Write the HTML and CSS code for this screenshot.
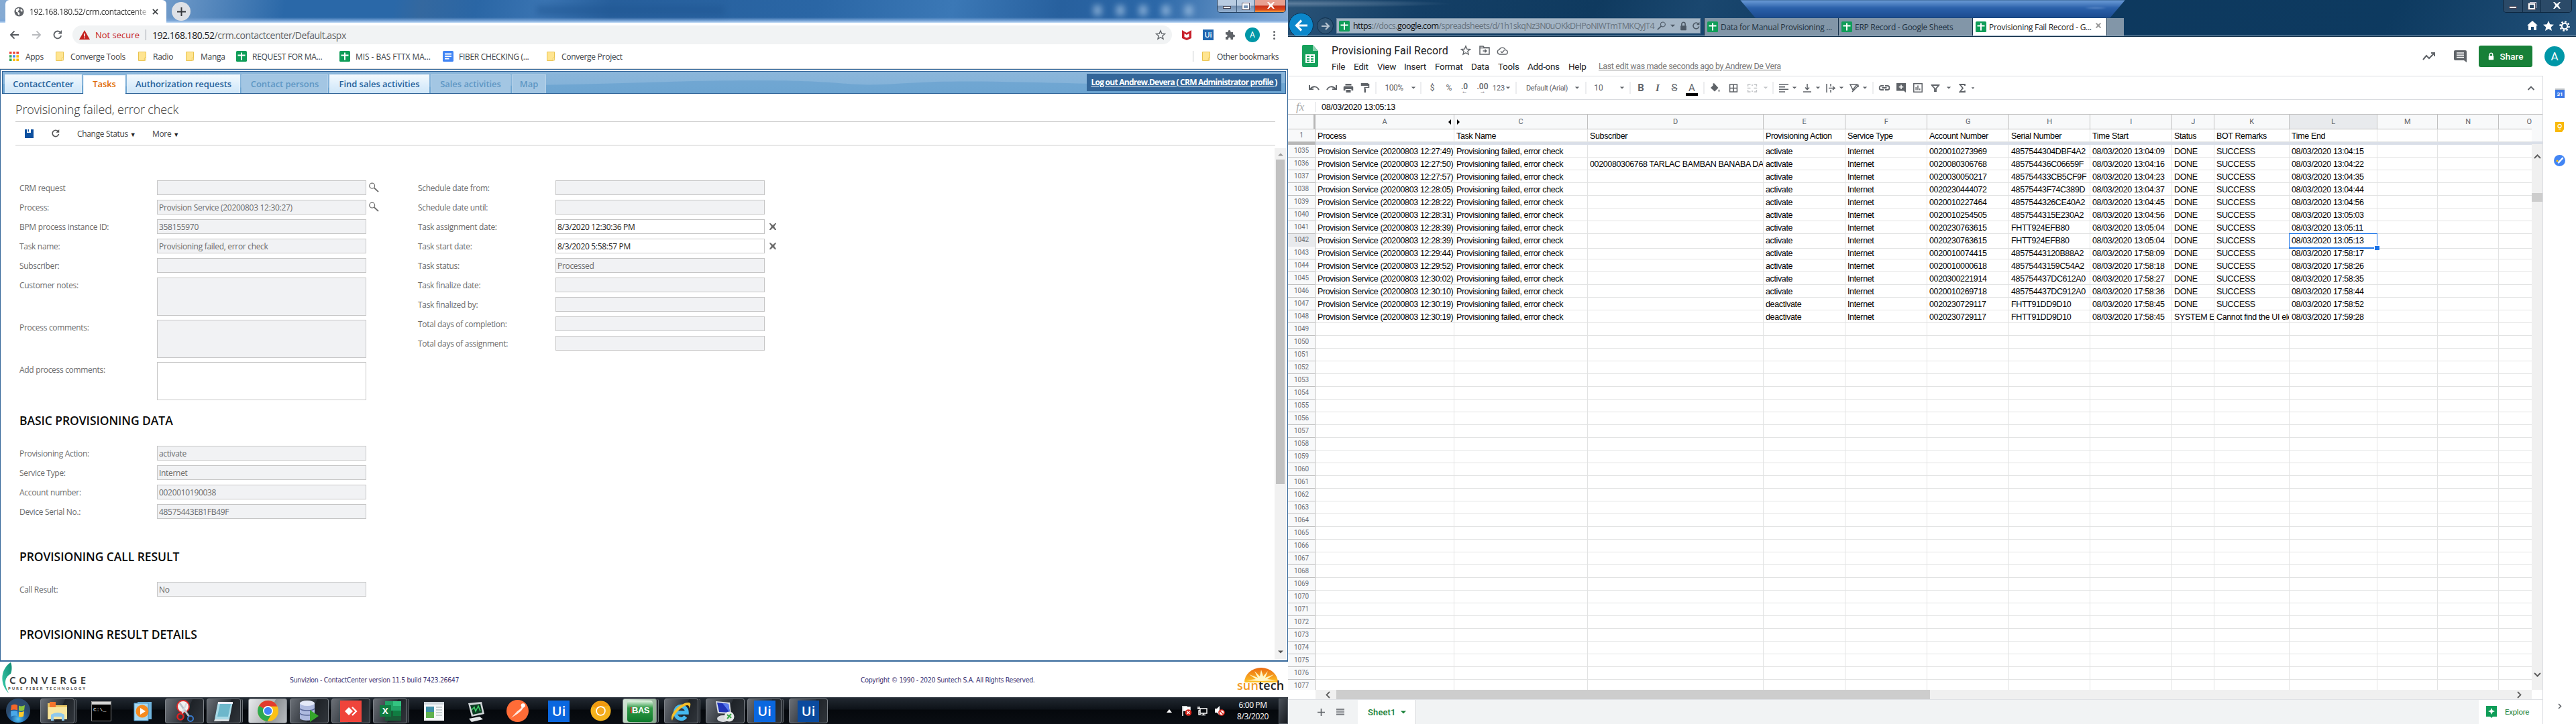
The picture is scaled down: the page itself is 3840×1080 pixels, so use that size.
FILE: index.html
```html
<!DOCTYPE html>
<html lang="en">
<head>
<meta charset="utf-8">
<title>Desktop</title>
<link rel="stylesheet" href="styles.css">
</head>
<body>
<svg class="sprite" aria-hidden="true">
  <symbol id="i-folder" viewBox="0 0 12 14"><path d="M.5.5h11v9l-2 3.9H.5z" fill="#ffe591" stroke="#e8c14b"/><path d="M9.3 13V9.5l2.2-1V13z" fill="#fff0b8" stroke="#e8c14b" stroke-width=".8"/></symbol>
  <symbol id="i-sheet" viewBox="0 0 16 16"><rect width="16" height="16" rx="1.6" fill="#0f9d58"/><path d="M7 2.5h2v3h4.500v2H9v6H7v-6H2.500v-2H7z" fill="#fff"/></symbol>
  <symbol id="i-doc" viewBox="0 0 16 16"><rect width="16" height="16" rx="1.600" fill="#4285f4"/><path d="M3 3.500h10v2H3zM3 7h10v2H3zM3 10.500h6.500v2H3z" fill="#fff"/></symbol>
  <symbol id="i-caret" viewBox="0 0 8 5"><path d="M0 .5h8L4 4.500z" fill="currentColor"/></symbol>
  <symbol id="i-star" viewBox="0 0 16 16"><path d="M8 1.800l1.800 4.300 4.700.4-3.600 3 1.100 4.600L8 11.700l-4 2.400 1.100-4.600-3.600-3 4.700-.4z" fill="none" stroke="currentColor" stroke-width="1.400"/></symbol>
  <symbol id="i-reload" viewBox="0 0 16 16"><path d="M13.200 9A5.400 5.400 0 1 1 11.800 4.200" fill="none" stroke="currentColor" stroke-width="1.900"/><path d="M14 1v5.500H8.500z" fill="currentColor"/></symbol>
  <symbol id="i-search" viewBox="0 0 16 16"><circle cx="5" cy="5.500" r="4.200" fill="none" stroke="currentColor" stroke-width="1.300"/><path d="M8 8.500l7 6.500" stroke="currentColor" stroke-width="2"/></symbol>
  <symbol id="i-lock" viewBox="0 0 12 16"><path d="M3 8V4.500a3 3 0 0 1 6 0V8" fill="none" stroke="currentColor" stroke-width="1.800"/><rect x="1" y="7" width="10" height="8" rx="1" fill="currentColor"/></symbol>
  <symbol id="i-chrome" viewBox="0 0 32 32"><circle cx="16" cy="16" r="15" fill="#fbc116"/><path d="M16 16L3 8.500A15 15 0 0 1 29.500 9.500H16z" fill="#e33b2e"/><path d="M16 16L3 8.500A15 15 0 0 0 15 31l7-12z" fill="#2da94f"/><circle cx="16" cy="16" r="7.200" fill="#fff"/><circle cx="16" cy="16" r="5.600" fill="#4285f4"/></symbol>
  <symbol id="i-x" viewBox="0 0 10 10"><path d="M1 0l4 3.400L9 0h1L6.700 5 10 10H8.500L5 6.600 1.500 10H0l3.300-5L0 0z" fill="currentColor" stroke="currentColor" stroke-width=".7"/></symbol>
</svg>

<div class="desktop">
<section class="monitor">
  <header class="chrome-tabs">
    <div class="chrome-tab">
      <svg width="15" height="15" viewBox="0 0 16 16"><circle cx="8" cy="8" r="7.500" fill="#5f6368"/><path d="M3 4l4-2 2 2-2 2-1 2 3 2-1 4-2-2-.5-3L3 8zM11 3l3 4-3 1-1-3z" fill="#fff"/></svg>
      <span class="chrome-tab-title">192.168.180.52/crm.contactcente</span>
      <svg class="tab-close" width="9" height="9" viewBox="0 0 10 10"><path d="M1 1l8 8M9 1L1 9" stroke="#3c4043" stroke-width="1.900"/></svg>
    </div>
    <span class="new-tab"><svg width="13" height="13" viewBox="0 0 12 12"><path d="M6 0v12M0 6h12" stroke="#35383c" stroke-width="1.800"/></svg></span>
    <div class="ghost ghost-a"></div><div class="ghost ghost-b"></div>
    <div class="win-buttons">
      <span><i class="w-min"></i></span><span><i class="w-max"></i></span><span class="w-close"><svg width="11" height="10"><use href="#i-x"/></svg></span>
    </div>
  </header>

  <div class="address-row">
    <svg width="15" height="14" viewBox="0 0 16 14"><path d="M15 7H2M8 1L2 7l6 6" fill="none" stroke="#55595e" stroke-width="1.900"/></svg>
    <svg width="15" height="14" viewBox="0 0 16 14"><path d="M1 7h13M8 1l6 6-6 6" fill="none" stroke="#b9bbbe" stroke-width="1.900"/></svg>
    <svg class="c-grey" width="16" height="16"><use href="#i-reload"/></svg>
    <div class="omnibox">
      <svg width="16" height="14" viewBox="0 0 16 14"><path d="M8 0l8 14H0z" fill="#c5221f"/><path d="M7.200 5h1.600v4.500H7.200zM7.200 10.800h1.600v1.500H7.200z" fill="#fff"/></svg>
      <span class="not-secure">Not secure</span>
      <span class="omni-url"><b>192.168.180.52</b>/crm.contactcenter/Default.aspx</span>
      <svg class="c-grey omni-star" width="16" height="16"><use href="#i-star"/></svg>
    </div>
    <svg width="14" height="15" viewBox="0 0 14 15"><path d="M0 0l7 4 7-4v12l-7 3-7-3z" fill="#c8202b"/><path d="M3.500 5L7 7l3.500-2v5L7 11.500 3.500 10z" fill="#fff"/></svg>
    <span class="ui-ext">Ui</span>
    <svg width="16" height="16" viewBox="0 0 16 16"><path d="M2 4h3.500V3a2 2 0 0 1 4 0v1H13v3.500h1a2 2 0 0 1 0 4h-1V15H9.500v-1.500a1.700 1.700 0 0 0-3.400 0V15H2v-4h1a1.700 1.700 0 0 0 0-3.400H2z" fill="#5f6368"/></svg>
    <span class="avatar avatar-sm">A</span>
    <span class="dots"><i></i><i></i><i></i></span>
  </div>

  <nav class="bookmarks">
    <span class="bm"><svg width="14" height="14" viewBox="0 0 14 14"><path d="M0 0h3.500v3.500H0zM5.200 0h3.500v3.500H5.200zM10.400 0H14v3.500h-3.600z" fill="#ea4335"/><path d="M0 5.200h3.500v3.500H0z" fill="#34a853"/><path d="M5.200 5.200h3.500v3.500H5.200z" fill="#4285f4"/><path d="M10.400 5.200H14v3.500h-3.600z" fill="#fbbc05"/><path d="M0 10.400h3.500V14H0z" fill="#34a853"/><path d="M5.200 10.400h3.500V14H5.200zM10.400 10.400H14V14h-3.600z" fill="#fbbc05"/></svg>Apps</span>
    <span class="bm"><svg width="12" height="14"><use href="#i-folder"/></svg>Converge Tools</span>
    <span class="bm"><svg width="12" height="14"><use href="#i-folder"/></svg>Radio</span>
    <span class="bm"><svg width="12" height="14"><use href="#i-folder"/></svg>Manga</span>
    <span class="bm bm-file"><svg width="16" height="16"><use href="#i-sheet"/></svg>REQUEST FOR MA...</span>
    <span class="bm bm-file wide"><svg width="16" height="16"><use href="#i-sheet"/></svg>MIS - BAS FTTX MA...</span>
    <span class="bm bm-file"><svg width="16" height="16"><use href="#i-doc"/></svg>FIBER CHECKING (...</span>
    <span class="bm"><svg width="12" height="14"><use href="#i-folder"/></svg>Converge Project</span>
    <span class="bm bm-other"><svg width="12" height="14"><use href="#i-folder"/></svg>Other bookmarks</span>
  </nav>

  <main class="crm">
    <div class="crm-head">
      <svg class="crm-wave" viewBox="0 0 1914 32" preserveAspectRatio="none"><path d="M0 18C320 26 620 26 960 16S1220 26 1350 17 1650 26 1914 17V32H0z" fill="#4a8fc6" opacity=".35"/></svg>
      <div class="crm-tabs">
        <span>ContactCenter</span><span class="on">Tasks</span><span>Authorization requests</span><span class="off">Contact persons</span><span>Find sales activities</span><span class="off">Sales activities</span><span class="off">Map</span>
      </div>
      <a class="logout">Log out Andrew.Devera ( CRM Administrator profile )</a>
    </div>
    <h1 class="crm-title">Provisioning failed, error check</h1>
    <div class="crm-tools">
      <svg width="13" height="13" viewBox="0 0 13 13"><path d="M0 0h3v5h6V0h4v13H0z" fill="#0d509f"/><path d="M4.500 0H6v3.500H4.500z" fill="#0d509f"/></svg>
      <svg class="refresh" width="14" height="14"><use href="#i-reload"/></svg>
      <span>Change Status <small>▼</small></span>
      <span>More <small>▼</small></span>
    </div>
    <div class="crm-body">
      <div class="crm-form">
        <div class="form-cols">
          <div>
            <div class="row"><label>CRM request</label><div class="field"></div><svg class="lens" width="15" height="15"><use href="#i-search"/></svg></div>
            <div class="row"><label>Process:</label><div class="field">Provision Service (20200803 12:30:27)</div><svg class="lens" width="15" height="15"><use href="#i-search"/></svg></div>
            <div class="row"><label>BPM process instance ID:</label><div class="field">358155970</div></div>
            <div class="row"><label>Task name:</label><div class="field">Provisioning failed, error check</div></div>
            <div class="row"><label>Subscriber:</label><div class="field"></div></div>
            <div class="row tall"><label>Customer notes:</label><div class="field"></div></div>
            <div class="row tall"><label>Process comments:</label><div class="field"></div></div>
            <div class="row tall"><label>Add process comments:</label><div class="field edit"></div></div>
          </div>
          <div>
            <div class="row"><label>Schedule date from:</label><div class="field"></div></div>
            <div class="row"><label>Schedule date until:</label><div class="field"></div></div>
            <div class="row"><label>Task assignment date:</label><div class="field edit">8/3/2020 12:30:36 PM</div><svg class="clear" width="10" height="10"><use href="#i-x"/></svg></div>
            <div class="row"><label>Task start date:</label><div class="field edit">8/3/2020 5:58:57 PM</div><svg class="clear" width="10" height="10"><use href="#i-x"/></svg></div>
            <div class="row"><label>Task status:</label><div class="field">Processed</div></div>
            <div class="row"><label>Task finalize date:</label><div class="field"></div></div>
            <div class="row"><label>Task finalized by:</label><div class="field"></div></div>
            <div class="row"><label>Total days of completion:</label><div class="field"></div></div>
            <div class="row"><label>Total days of assignment:</label><div class="field"></div></div>
          </div>
        </div>
        <h2 class="first">BASIC PROVISIONING DATA</h2>
        <div class="row"><label>Provisioning Action:</label><div class="field">activate</div></div>
        <div class="row"><label>Service Type:</label><div class="field">Internet</div></div>
        <div class="row"><label>Account number:</label><div class="field">0020010190038</div></div>
        <div class="row"><label>Device Serial No.:</label><div class="field">48575443E81FB49F</div></div>
        <h2>PROVISIONING CALL RESULT</h2>
        <div class="row"><label>Call Result:</label><div class="field">No</div></div>
        <h2>PROVISIONING RESULT DETAILS</h2>
      </div>
      <div class="crm-scroll"><svg width="8" height="5" viewBox="0 0 8 5"><path d="M0 4.500h8L4 .5z" fill="#9a9a9a"/></svg><i></i><svg width="8" height="5"><use href="#i-caret"/></svg></div>
    </div>
  </main>

  <footer class="crm-foot">
    <svg class="converge" width="129" height="48" viewBox="0 0 129 48"><defs><linearGradient id="cv" x1="1" y1="0" x2="0" y2="1"><stop offset="0" stop-color="#0c8a72"/><stop offset="1" stop-color="#3ed0ae"/></linearGradient></defs><path d="M16 0C3 8-3 30 13 46 5 32 7 22 16 17c2-5 2-12 0-17z" fill="url(#cv)"/><text x="14" y="32" textLength="114" class="cv-name">CONVERGE</text><text x="12" y="41" textLength="115" class="cv-sub">PURE FIBER TECHNOLOGY</text></svg>
    <span class="version">Sunvizion - ContactCenter version 11.5 build 7423.26647</span>
    <span class="copyright">Copyright © 1990 - 2020 Suntech S.A. All Rights Reserved.</span>
    <div class="suntech"><svg width="50" height="22" viewBox="0 0 50 22"><defs><linearGradient id="sg" x1="0" y1="0" x2="0" y2="1"><stop offset="0" stop-color="#ea6a12"/><stop offset="1" stop-color="#ffc425"/></linearGradient></defs><path d="M0 22a25 22 0 0 1 50 0z" fill="url(#sg)"/><path d="M25 20L3 19l14-2-10-7 13 5-5-10 8 8 2-10 3 10 7-8-4 10 13-5-10 7 14 2z" fill="#fff6c8"/></svg><b><em>sun</em>tech</b></div>
  </footer>

  <div class="taskbar">
    <svg class="start" width="38" height="38" viewBox="0 0 38 38"><defs><radialGradient id="orb" cx=".5" cy=".85"><stop offset="0" stop-color="#53c3f2"/><stop offset=".6" stop-color="#1f63a8"/><stop offset="1" stop-color="#2c4a6b"/></radialGradient></defs><circle cx="19" cy="19" r="18" fill="url(#orb)"/><path d="M9 11q5-2.500 9 0v7.500q-5-2-10 0z" fill="#f2672a"/><path d="M20 11.500q4 2 9-.5l-1 7.500q-4 2-8 .5z" fill="#8cc63e"/><path d="M8 20q5-2 10 0v7.500q-4-2-9.500.500z" fill="#4aa8e8"/><path d="M20 20.500q4 1.500 8-.5l-1 7.500q-3 2-7 .5z" fill="#fcc92c"/></svg>
    <div class="slots">
      <span class="slot box stack"><svg width="34" height="30" viewBox="0 0 34 30"><path d="M2 3h10l2 3h17v21H2z" fill="#e9c766"/><path d="M5 1h9v8H5z" fill="#f4742c"/><path d="M3 9h28v18H3z" fill="#f8e6a0"/><path d="M7 29v-9q10-6 20 0v9h-4v-6H11v6z" fill="#8fc9ee"/></svg></span>
      <span class="slot"><svg width="30" height="30" viewBox="0 0 30 30"><path d="M0 0h30v30H0z" fill="#000"/><path d="M0 0h30v5H0z" fill="#d6d6d6"/><path d="M.5.500h29v29H.5z" fill="none" stroke="#888"/><text x="3" y="15" class="cmd">C:\_</text></svg></span>
      <span class="slot"><svg width="28" height="30" viewBox="0 0 28 30"><path d="M6 1h21v26H6z" fill="#6fb3dc"/><path d="M1 3h21v26H1z" fill="#a7d8f0" stroke="#4a94c4"/><circle cx="13" cy="15" r="9.500" fill="#f68b1f"/><path d="M10 10l8 5-8 5z" fill="#fff"/></svg></span>
      <span class="slot box"><svg width="30" height="34" viewBox="0 0 30 34"><circle cx="13" cy="10" r="9" fill="#f1f1f1" stroke="#dd2a2a" stroke-width="2"/><path d="M8 5l14 20" stroke="#b9c0c8" stroke-width="3"/><path d="M18 5L11 22" stroke="#d5d9de" stroke-width="2.500"/><circle cx="24" cy="28" r="4" fill="none" stroke="#3a7cd0" stroke-width="2"/><circle cx="9" cy="25" r="4.500" fill="none" stroke="#e02020" stroke-width="2.500"/></svg></span>
      <span class="slot box stack"><svg width="32" height="32" viewBox="0 0 32 32"><path d="M7 2h22l-5 26H2z" fill="#a9d9e6"/><path d="M10 5h16l-4 19H6z" fill="#6db7cb"/><path d="M2 28h22l-1 3H1z" fill="#d8dfe2"/><path d="M7 2h22v3H7z" fill="#eef"/></svg></span>
      <span class="slot box lit"><svg width="33" height="33"><use href="#i-chrome"/></svg></span>
      <span class="slot box"><svg width="32" height="34" viewBox="0 0 32 34"><path d="M2 5v22c0 5 22 5 22 0V5z" fill="#aebadf"/><ellipse cx="13" cy="5" rx="11" ry="4" fill="#e4e9f8"/><path d="M2 13c3 4 19 4 22 0M2 20c3 4 19 4 22 0" fill="none" stroke="#5a6898" stroke-width="1.500"/><path d="M17 15l13 9-13 9z" fill="#36a52c"/></svg></span>
      <span class="slot box"><svg width="32" height="32" viewBox="0 0 32 32"><path d="M0 0h32v32H0z" fill="#ef443b"/><path d="M13 10l6 6-6 6-6-6z" fill="#fff"/><path d="M18 10l6 6-6 6" fill="none" stroke="#fff" stroke-width="2.300"/></svg></span>
      <span class="slot box stack"><svg width="32" height="29" viewBox="0 0 32 29"><path d="M8 0h24v29H8z" fill="#21a366"/><path d="M20 0h12v7H20z" fill="#33c481"/><path d="M8 14h24v15H8z" fill="#185c37"/><path d="M20 14h12v8H20z" fill="#107c41"/><path d="M0 6h17v17H0z" fill="#107c41"/><text x="4" y="19" class="xl">X</text></svg></span>
      <span class="slot"><svg width="30" height="28" viewBox="0 0 30 28"><path d="M0 0h30v28H0z" fill="#f4f6f8"/><path d="M0 0h30v4H0z" fill="#cfd6dc"/><path d="M3 7h12v17H3z" fill="#3f8fa8"/><path d="M3 15h12v9H3z" fill="#5fb04e"/><path d="M18 8h9M18 12h9M18 16h9M18 20h9" stroke="#9aa" /></svg></span>
      <span class="slot"><svg width="32" height="32" viewBox="0 0 32 32"><path d="M5 4l20-2 4 18-19 4z" fill="#cfd3d6"/><path d="M8 7l15-2 3 13-14 3z" fill="#0d3b22"/><path d="M10 14l4-4 2 6 4-8 3 8" fill="none" stroke="#41d36a" stroke-width="1.500"/><path d="M6 27l16-3 5 4-17 4z" fill="#e3e6e8"/></svg></span>
      <span class="slot"><svg width="33" height="33" viewBox="0 0 32 32"><circle cx="16" cy="16" r="16" fill="#ff6c37"/><path d="M7 26l8-9 5-4 3-4 2 2-4 5-5 4z" fill="#fff" opacity=".85"/><circle cx="24" cy="8" r="3" fill="#fff"/></svg></span>
      <span class="slot"><i class="uipath">Ui</i></span>
      <span class="slot"><svg width="31" height="31" viewBox="0 0 32 32"><circle cx="16" cy="16" r="15.500" fill="#f5b21b"/><path d="M16 16L3 8.500A15.500 15.500 0 0 1 29.500 8.500H16z" fill="#f09a10"/><circle cx="16" cy="16" r="7.500" fill="#fff"/><circle cx="16" cy="16" r="5.700" fill="#f4a71c"/></svg></span>
      <span class="slot box stack bright"><i class="ibas"><b>i</b>BAS</i></span>
      <span class="slot box stack"><svg width="34" height="34" viewBox="0 0 34 34"><path d="M8 19h17a8.700 9.500 0 1 0-2 6" fill="none" stroke="#45b9ef" stroke-width="5.500"/><path d="M3 31C-3 22 16 3 28 4c4 1 2 5 0 9 1-5-2-6-6-4C13 13 5 23 3 31z" fill="#f5bf2a"/></svg></span>
      <span class="slot box"><svg width="34" height="34" viewBox="0 0 34 34"><path d="M3 2l21 2 2 17L6 20z" fill="#d7dce4"/><path d="M5 4l17 2 2 13L8 18z" fill="#2034b8"/><path d="M13 5l9 1 2 13z" fill="#5b7cf0"/><ellipse cx="14" cy="28" rx="9" ry="5" fill="#d9dcdf"/><circle cx="23" cy="25" r="7.500" fill="#e7eae8"/><path d="M20 22l3 3-3 3M26 21l-3 3 3 3" fill="none" stroke="#35a646" stroke-width="2"/></svg></span>
      <span class="slot box stack"><i class="uipath">Ui</i></span>
      <span class="slot box"><i class="uipath navy">Ui</i></span>
    </div>
    <div class="tray">
      <svg width="8" height="5" viewBox="0 0 8 5"><path d="M0 5h8L4 0z" fill="#fff"/></svg>
      <svg width="16" height="16" viewBox="0 0 16 16"><path d="M2 1v15M3 2h5l1 1h4v6H8L7 8H3" fill="#fff" stroke="#fff" stroke-width="1.500"/><circle cx="10.500" cy="11" r="4.800" fill="#d9261c"/><path d="M8.500 9l4 4M12.500 9l-4 4" stroke="#fff" stroke-width="1.300"/></svg>
      <svg width="16" height="15" viewBox="0 0 16 15"><path d="M5 4h10v7H5zM7 13.500h6M10 11v3M2 1v3M4 1v3M1 4h4v3H3v6h3" fill="none" stroke="#fff" stroke-width="1.400"/></svg>
      <svg width="16" height="16" viewBox="0 0 16 16"><path d="M1 5h3l4-4v14l-4-4H1z" fill="#fff"/><circle cx="11" cy="11" r="4" fill="#fff" stroke="#d9261c" stroke-width="1.700"/><path d="M8.300 8.300l5.500 5.500" stroke="#d9261c" stroke-width="1.500"/></svg>
      <div class="clock">6:00 PM<br>8/3/2020</div>
      <i class="show-desktop"></i>
    </div>
  </div>
</section>

<section class="monitor">
  <header class="ie-head">
    <div class="ie-glow"></div>
    <div class="win-buttons ie-win">
      <span><i class="w-min"></i></span><span><i class="w-max"></i></span><span class="ie-close"><svg width="11" height="10"><use href="#i-x"/></svg></span>
    </div>
    <div class="ie-row">
      <span class="ie-back"><svg width="20" height="18" viewBox="0 0 20 18"><path d="M19 9H3M10 1.500L2.500 9l7.500 7.500" fill="none" stroke="#fff" stroke-width="3.200"/></svg></span>
      <span class="ie-fwd"><svg width="14" height="12" viewBox="0 0 14 12"><path d="M1 6h11M7 1l5 5-5 5" fill="none" stroke="#b4c2cf" stroke-width="2.200"/></svg></span>
      <div class="ie-addr">
        <svg width="16" height="16"><use href="#i-sheet"/></svg>
        <span class="ie-url"><b>https</b>://docs.<b>google.com</b>/spreadsheets/d/1h1skqNz3N0uOKkDHPoNIWTmTMKQyJT4</span>
        <svg class="flip" width="13" height="13"><use href="#i-search"/></svg>
        <svg width="7" height="5"><use href="#i-caret"/></svg>
        <svg width="11" height="14"><use href="#i-lock"/></svg>
        <svg width="13" height="13"><use href="#i-reload"/></svg>
      </div>
      <div class="ie-tabs">
        <span><svg width="16" height="16"><use href="#i-sheet"/></svg>Data for Manual Provisioning ...</span>
        <span><svg width="16" height="16"><use href="#i-sheet"/></svg>ERP Record - Google Sheets</span>
        <span class="on"><svg width="16" height="16"><use href="#i-sheet"/></svg>Provisioning Fail Record - G...<svg class="ie-x" width="8" height="8"><use href="#i-x"/></svg></span>
        <span class="blank"></span>
      </div>
      <div class="ie-icons">
        <svg width="16" height="14" viewBox="0 0 16 14"><path d="M8 0l8 7h-2v7h-4V9H6v5H2V7H0z" fill="#fff"/></svg>
        <svg width="16" height="15" viewBox="0 0 16 15"><path d="M8 0l2.300 5.200 5.700.6-4.300 3.800L13 15l-5-3-5 3 1.300-5.400L0 5.800l5.700-.6z" fill="#fff"/></svg>
        <svg width="16" height="16" viewBox="0 0 16 16"><circle cx="8" cy="8" r="4.300" fill="none" stroke="#fff" stroke-width="2.200"/><circle cx="8" cy="8" r="6.600" fill="none" stroke="#fff" stroke-width="2.400" stroke-dasharray="2.600 2.584"/></svg>
      </div>
    </div>
  </header>

  <div class="sheets">
    <header class="doc-head">
      <svg class="doc-logo" width="24" height="33" viewBox="0 0 24 33"><path d="M2 0h14l8 9v22a2 2 0 0 1-2 2H2a2 2 0 0 1-2-2V2a2 2 0 0 1 2-2z" fill="#16a15c"/><path d="M16 0l8 9h-8z" fill="#8ed1b1"/><path d="M5 14h14v13H5zM7 16v2h4v-2zm6 0v2h4v-2zm-6 4v2h4v-2zm6 0v2h4v-2zm-6 3.500v2h4v-2zm6 0v2h4v-2z" fill="#fff" fill-rule="evenodd"/></svg>
      <div class="doc-meta">
        <div class="doc-title"><span>Provisioning Fail Record</span>
          <svg width="16" height="16"><use href="#i-star"/></svg>
          <svg width="16" height="14" viewBox="0 0 16 14"><path d="M1 1h5l1.500 2H15v10H1zM1 3.500h14M5.500 8h5M8.500 5.800l2.300 2.200-2.300 2.200" fill="none" stroke="#5f6368" stroke-width="1.500"/></svg>
          <svg width="17" height="13" viewBox="0 0 17 13"><path d="M4.500 12a3.600 3.600 0 0 1-.3-7.100A4.700 4.700 0 0 1 13 5.600 3.200 3.200 0 0 1 13 12zM6 7.500l2 2 3.500-3.500" fill="none" stroke="#5f6368" stroke-width="1.400"/></svg>
        </div>
        <nav class="doc-menu"><span>File</span><span>Edit</span><span>View</span><span>Insert</span><span>Format</span><span>Data</span><span>Tools</span><span>Add-ons</span><span>Help</span><a>Last edit was made seconds ago by Andrew De Vera</a></nav>
      </div>
      <div class="doc-actions">
        <svg width="20" height="12" viewBox="0 0 20 12"><path d="M1 11l5-6 4 4 8-8M13 1h5v5" fill="none" stroke="#5f6368" stroke-width="2"/></svg>
        <svg width="19" height="18" viewBox="0 0 19 18"><path d="M2 0h15a2 2 0 0 1 2 2v16l-4-3H2a2 2 0 0 1-2-2V2a2 2 0 0 1 2-2z" fill="#5f6368"/><path d="M4 4h11M4 7.300h11M4 10.600h11" stroke="#fff" stroke-width="1.500"/></svg>
        <button class="share"><svg width="9" height="12"><use href="#i-lock"/></svg>Share</button>
        <span class="avatar avatar-lg">A</span>
      </div>
    </header>
    <div class="doc-body">
      <div class="doc-main">
        <div class="doc-tools">
          <svg width="16" height="8" viewBox="0 0 16 8"><path d="M1 0v6h6M2 6C6 1 12 1 15 7" fill="none" stroke="#5f6368" stroke-width="2"/></svg>
          <svg width="16" height="8" viewBox="0 0 16 8"><path d="M15 0v6H9M14 6C10 1 4 1 1 7" fill="none" stroke="#5f6368" stroke-width="2"/></svg>
          <svg width="15" height="13" viewBox="0 0 15 13"><path d="M3 0h9v2.500H3zM2 3.500h11a2 2 0 0 1 2 2V10h-3V8H3v2H0V5.500a2 2 0 0 1 2-2zM4 9h7v4H4z" fill="#5f6368"/></svg>
          <svg width="13" height="14" viewBox="0 0 13 14"><path d="M0 0h11v4H0zM11 1h2v6H7v2H5V6h6zM5 8.500h2.500V14H5z" fill="#5f6368"/></svg>
          <i class="sep"></i><span class="zoom">100%</span><svg width="7" height="4"><use href="#i-caret"/></svg><i class="sep"></i>
          <span>$</span><span>%</span><span class="dec">.0<u>←</u></span><span class="dec">.00<u>→</u></span><span class="n123">123</span><svg width="7" height="4"><use href="#i-caret"/></svg><i class="sep"></i>
          <span class="tiny">Default (Arial)</span><svg width="7" height="4"><use href="#i-caret"/></svg><i class="sep"></i>
          <span>10</span><svg width="7" height="4"><use href="#i-caret"/></svg><i class="sep"></i>
          <b class="lt">B</b><em class="lt ser">I</em><s class="lt">S</s><span class="lt fg">A</span><i class="sep"></i>
          <svg width="14" height="14" viewBox="0 0 14 14"><path d="M5 0l6.500 7L6 12.500 0 7l4-4-1-2zM12.500 9q2 3 0 4-2-1 0-4z" fill="#5f6368"/></svg>
          <svg width="13" height="13" viewBox="0 0 13 13"><path d="M1 1h11v11H1zM6.500 1v11M1 6.500h11" fill="none" stroke="#5f6368" stroke-width="1.700"/></svg>
          <svg width="15" height="13" viewBox="0 0 15 13"><path d="M1 4V1h4M10 1h4v3M14 9v3h-4M5 12H1V9M0 6.500h5M10 6.500h5M7.500 1v2M7.500 10v2" fill="none" stroke="#c3c5c8" stroke-width="1.700"/></svg>
          <svg class="dim" width="7" height="4"><use href="#i-caret"/></svg><i class="sep"></i>
          <svg width="14" height="13" viewBox="0 0 14 13"><path d="M0 1h14M0 4.600h9M0 8.300h14M0 12h9" stroke="#5f6368" stroke-width="1.600"/></svg><svg width="7" height="4"><use href="#i-caret"/></svg>
          <svg width="12" height="13" viewBox="0 0 12 13"><path d="M6 0v8M3 5.500L6 8.500l3-3M0 12h12" fill="none" stroke="#5f6368" stroke-width="1.600"/></svg><svg width="7" height="4"><use href="#i-caret"/></svg>
          <svg width="14" height="13" viewBox="0 0 14 13"><path d="M1 0v13M7 0v4M7 9v4M4 6.500h9M10 4l3 2.500L10 9" fill="none" stroke="#5f6368" stroke-width="1.500"/></svg><svg width="7" height="4"><use href="#i-caret"/></svg>
          <svg width="14" height="13" viewBox="0 0 14 13"><path d="M1 1l4 8 6-8zM4 12l9-9M10 2h3v3" fill="none" stroke="#5f6368" stroke-width="1.500"/></svg><svg width="7" height="4"><use href="#i-caret"/></svg><i class="sep"></i>
          <svg width="17" height="8" viewBox="0 0 17 8"><path d="M7.500 1H4a3 3 0 0 0 0 6h3.500M9.500 1H13a3 3 0 0 1 0 6H9.500M5 4h7" fill="none" stroke="#5f6368" stroke-width="1.800"/></svg>
          <svg width="14" height="14" viewBox="0 0 14 14"><path d="M0 0h14v14l-3-2.500H0z" fill="#5f6368"/><path d="M7 2.500v6.500M3.700 5.800h6.600" stroke="#fff" stroke-width="1.600"/></svg>
          <svg width="14" height="14" viewBox="0 0 14 14"><path d="M.8.8h12.400v12.400H.8zM4.200 10.500V6M7 10.500v-7M9.800 10.500V8" fill="none" stroke="#5f6368" stroke-width="1.500"/></svg>
          <svg width="13" height="11" viewBox="0 0 13 11"><path d="M1 1h11L7.500 6v4h-2V6z" fill="none" stroke="#5f6368" stroke-width="1.800"/></svg><svg width="7" height="4"><use href="#i-caret"/></svg>
          <svg width="10" height="13" viewBox="0 0 10 13"><path d="M9 3V1H1.500L6 6.500 1.500 12H9v-2" fill="none" stroke="#5f6368" stroke-width="1.800"/></svg><svg width="5" height="3"><use href="#i-caret"/></svg>
          <svg width="11" height="7" viewBox="0 0 11 7"><path d="M1 6l4.500-4.500L10 6" fill="none" stroke="#5f6368" stroke-width="1.900"/></svg>
        </div>
        <div class="fx-bar"><i>fx</i><span>08/03/2020 13:05:13</span></div>
        <div class="grid-wrap">
          <div class="grid" id="grid"></div>
          <div class="v-scroll"><svg width="11" height="7" viewBox="0 0 11 7"><path d="M1 6l4.500-4.500L10 6" fill="none" stroke="#606060" stroke-width="2"/></svg><i></i><svg width="11" height="7" viewBox="0 0 11 7"><path d="M1 1l4.500 4.500L10 1" fill="none" stroke="#606060" stroke-width="2"/></svg></div>
        </div>
        <div class="h-scroll"><svg width="7" height="11" viewBox="0 0 7 11"><path d="M6 1L1.500 5.500 6 10" fill="none" stroke="#606060" stroke-width="1.800"/></svg><i></i><svg width="7" height="11" viewBox="0 0 7 11"><path d="M1 1l4.500 4.500L1 10" fill="none" stroke="#606060" stroke-width="1.800"/></svg></div>
        <footer class="sheet-tabs">
          <svg width="11" height="11" viewBox="0 0 11 11"><path d="M5.500 0v11M0 5.500h11" stroke="#5f6368" stroke-width="1.600"/></svg>
          <svg width="12" height="10" viewBox="0 0 12 10"><path d="M0 1h12M0 3.700h12M0 6.400h12M0 9.100h12" stroke="#5f6368" stroke-width="1.500"/></svg>
          <span class="sheet-tab">Sheet1<svg width="8" height="5"><use href="#i-caret"/></svg></span>
          <span class="explore"><svg width="16" height="18" viewBox="0 0 16 18"><path d="M0 0h16v16h-6l-2 2-2-2H0z" fill="#0f9d58"/><path d="M8 3l1.500 3.500L13 8 9.500 9.500 8 13 6.500 9.500 3 8l3.500-1.500z" fill="#fff"/></svg>Explore</span>
        </footer>
      </div>
      <aside class="side">
        <svg width="14" height="15" viewBox="0 0 14 15"><path d="M0 1h14v3H0z" fill="#bfc3c8"/><path d="M0 3h14v12H0z" fill="#3b78e7"/><text x="2.500" y="12" class="cal">31</text></svg>
        <svg width="15" height="15" viewBox="0 0 15 15"><path d="M1 0h13v11l-3 4H1z" fill="#f9b908"/><circle cx="7.500" cy="6" r="2.600" fill="none" stroke="#fff" stroke-width="1.200"/><path d="M6 10.500h3" stroke="#fff" stroke-width="1.400"/></svg>
        <svg width="17" height="17" viewBox="0 0 17 17"><circle cx="8.500" cy="8.500" r="8.500" fill="#4285f4"/><path d="M7 11.500l6-6.500" stroke="#fff" stroke-width="2.500" stroke-linecap="round"/><circle cx="5" cy="9" r="1.600" fill="#fbbc05"/></svg>
        <svg class="side-more" width="6" height="9" viewBox="0 0 6 9"><path d="M1 1l3.500 3.500L1 8" fill="none" stroke="#5f6368" stroke-width="1.500"/></svg>
      </aside>
    </div>
  </div>
</section>
</div>
<script src="script.js"></script>
</body>
</html>
```
FILE: styles.css
```css
* { box-sizing: border-box; }
body { margin: 0; font-family: "Open Sans", "Noto Sans", sans-serif; font-size: 12px; color: #333; background: #fff; }
svg { display: block; flex: none; }
i, em { font-style: normal; }
.sprite { position: absolute; width: 0; height: 0; }
.desktop { display: flex; width: 3840px; height: 1080px; overflow: hidden; }
.monitor { width: 1920px; height: 1080px; display: flex; flex-direction: column; overflow: hidden; white-space: nowrap; }
.c-grey { color: #5f6368; }

/* browser title bar */
.chrome-tabs { position: relative; height: 34px; display: flex; padding-left: 8px; background: linear-gradient(180deg, transparent 26px, #7ba6d8 31px, #c3dcf6 34px), linear-gradient(100deg, #86abd3 0, #6e99c8 250px, #2a68a8 420px, #2a68a8 580px, #34689f 620px, #2a66a5 700px, #3a74b2 800px, #275f9c 900px, #2a66a5 1200px, #3b78b6 1400px, #27609e 1560px, #2c68a8 1700px, #6f9bcb 1850px, #8fb3dc 1920px); }
.chrome-tab { width: 240px; height: 34px; display: flex; align-items: center; padding: 0 11px 0 13px; background: #fff; border-radius: 6px 6px 0 0; }
.chrome-tab-title { margin-left: 8px; width: 176px; letter-spacing: -.4px; mask-image: linear-gradient(90deg, #000 155px, rgba(0, 0, 0, .25)); }
.tab-close { margin-left: 7px; }
.new-tab { width: 28px; height: 28px; margin: 3px 0 0 8px; border-radius: 50%; background: #dee1e6; display: flex; align-items: center; justify-content: center; }
.ghost { position: absolute; top: 8px; height: 15px; filter: blur(5px); background: #1f5692; opacity: .5; }
.ghost-a { left: 800px; width: 280px; }
.ghost-b { left: 1630px; width: 150px; background: repeating-linear-gradient(90deg, #bcd6f0 0 12px, transparent 12px 34px); opacity: .6; }
.win-buttons { margin: 0 3px 0 auto; width: 103px; height: 19px; display: grid; grid-template-columns: 29px 27px 47px; border: 1px solid #24405f; border-top: 0; border-radius: 0 0 5px 5px; overflow: hidden; position: relative; }
.win-buttons span { display: flex; align-items: center; justify-content: center; background: linear-gradient(#b9cce2 45%, #7691b1 50%, #93afcf); border-right: 1px solid #3c5879; }
.win-buttons .w-close { background: linear-gradient(#e8a090 42%, #c8321a 50%, #d9481c 80%, #f3a040); border: 0; color: #fff; padding-bottom: 2px; }
.w-min { width: 12px; height: 4px; background: #fff; border: 1px solid #445; margin-top: 4px; }
.w-max { width: 10px; height: 9px; border: 2px solid #fff; outline: 1px solid #556; box-shadow: 2px -2px 0 #dde; }

/* address bar */
.address-row { height: 36px; display: flex; align-items: center; padding-left: 14px; }
.address-row > svg:nth-child(2) { margin-left: 18px; }
.address-row > svg:nth-child(3) { margin-left: 16px; }
.omnibox { width: 1639px; height: 28px; margin: 0 15px 0 14px; padding: 0 9px 0 10px; border-radius: 14px; background: #f1f3f4; display: flex; align-items: center; font-size: 14px; color: #5f6368; }
.not-secure { margin-left: 8px; width: 76px; color: #c5221f; font-size: 13px; border-right: 1px solid #9aa0a6; line-height: 16px; }
.omni-url { margin-left: 9px; letter-spacing: -.47px; }
.omni-url b { color: #202124; font-weight: 400; }
.omni-star { margin-left: auto; }
.ui-ext { width: 16px; height: 16px; margin: 0 16px 0 17px; background: #1f66b0; color: #fff; font: 600 11px/15px "Open Sans", sans-serif; text-align: center; }
.avatar { border-radius: 50%; background: #0097a7; color: #fff; text-align: center; font-family: Roboto, sans-serif; }
.avatar-sm { width: 22px; height: 22px; margin: 0 20px 0 15px; font-size: 12px; line-height: 22px; }
.dots { display: grid; gap: 2px; }
.dots i { width: 3px; height: 3px; border-radius: 50%; background: #5f6368; }

/* bookmarks */
.bookmarks { height: 33px; padding-left: 14px; border-bottom: 1px solid #d4d6d9; display: grid; grid-template-columns: 69px 123px 71px 75px 154px 154px 155px 963px 1fr; align-items: center; padding-bottom: 4px; color: #3c4043; letter-spacing: -.28px; }
.bm { display: flex; align-items: center; gap: 10px; }
.bm-file { gap: 8px; }
.bm.wide { letter-spacing: -.06px; }
.bm-other { border-left: 1px solid #c4c7ca; padding-left: 13px; height: 16px; letter-spacing: -.44px; }

/* CRM page */
.crm { height: 884px; border: 1px solid #336699; border-bottom-width: 2px; padding: 2px; display: flex; flex-direction: column; }
.crm-head { position: relative; height: 34px; flex: none; border: 1px solid #336699; background: linear-gradient(#8bb6da, #7fb0d8); display: flex; justify-content: space-between; padding: 4px 6px 0 3px; }
.crm-wave { position: absolute; left: 0; top: 0; width: 100%; height: 100%; }
.crm-tabs { position: relative; display: grid; grid-template-columns: 117px 65px 171px 131px 151px 121px 53px; font: 600 13px/26px "Open Sans", sans-serif; letter-spacing: -.05px; color: #28639b; text-align: center; }
.crm-tabs span { margin-right: 2px; background: linear-gradient(#f3f9fd, #ddeefb 55%, #cfe6f8); border: 1px solid #e6f1fa; border-bottom: 0; }
.crm-tabs .on { background: #fff; color: #e06c05; margin: 1px 2px -1px 0; line-height: 25px; }
.crm-tabs .off { background: #a3c6e3; color: #5f97c4; border-color: #b7d2e9; }
.logout { position: relative; margin-top: -1px; height: 26px; width: 290px; background: #336699; color: #fff; font-weight: 700; font-size: 12px; line-height: 26px; text-align: center; text-decoration: underline; letter-spacing: -.75px; }
.crm-title { margin: 0 16px 0 20px; height: 42px; flex: none; border-bottom: 1px solid #ccc; font-weight: 300; font-size: 18px; line-height: 46px; letter-spacing: -.14px; color: #333; }
.crm-tools { height: 35px; flex: none; margin: 0 16px 0 20px; padding-left: 14px; border-bottom: 1px solid #ccc; display: grid; grid-template-columns: 39px 39px 112px 1fr; align-items: center; letter-spacing: -.33px; color: #444; }
.crm-tools small { font-size: 9px; color: #222; }
.refresh { color: #555; }
.crm-body { flex: 1; min-height: 0; display: flex; justify-content: space-between; padding-top: 4px; }
.crm-form { padding: 48px 0 0 26px; }
.form-cols { display: grid; grid-template-columns: 594px 560px; height: 334px; }
.row { display: flex; height: 29px; color: #6b6b6b; letter-spacing: -.31px; }
.row.tall { height: 63px; }
.row label { width: 205px; line-height: 24px; }
.field { width: 312px; height: 22px; border: 1px solid #c6c6c6; background: #f1f2f4; padding-left: 2px; line-height: 22px; }
.tall .field { height: 57px; }
.field.edit { background: #fff; color: #222; }
.lens { margin: 3px 0 0 4px; color: #6d6d6d; }
.clear { margin: 6px 0 0 7px; color: #666; }
h2 { margin: 37px 0 26px; font-size: 17.500px; font-weight: 600; line-height: 24px; color: #0a0a0a; letter-spacing: -.07px; }
h2.first { margin-top: 12px; }
.crm-scroll { width: 17px; height: 762px; background: #f1f1f1; display: flex; flex-direction: column; align-items: center; padding: 7px 0 8px; color: #555; }
.crm-scroll i { width: 13px; height: 484px; margin: 5px 0 auto; background: #c1c1c1; }

.crm-foot { height: 53px; display: grid; grid-template-columns: 432px 851px 561px 1fr; align-items: center; font: 10.500px "DejaVu Sans Condensed", "Noto Sans", sans-serif; color: #3b3170; background: #fff; letter-spacing: -.35px; }
.converge { align-self: start; margin-top: 1px; }
.cv-name { font: 600 15px "Noto Sans", sans-serif; fill: #33373a; letter-spacing: 0; }
.cv-sub { font: 700 6px "Noto Sans", sans-serif; fill: #555; letter-spacing: 0; }
.suntech { width: 72px; }
.suntech svg { margin: 0 auto; }
.suntech b { display: block; font: 600 18px/18px "Open Sans", sans-serif; margin-top: -5px; color: #1c1c1c; letter-spacing: .1px; }
.suntech em { color: #f29a1f; }

/* taskbar */
.taskbar { height: 40px; display: flex; background: linear-gradient(#3a424c 0, #20272f 2px, #0d1218 18px, #05080c 19px, #0a0e13); }
.start { margin: 1px 14px 0 8px; }
.slots { display: grid; grid-template-columns: repeat(19, 62px); }
.slot { height: 37px; margin: 2px 4px 0 0; display: flex; align-items: center; justify-content: center; }
.slot.box { border: 1px solid #7d8288; border-radius: 3px; background: linear-gradient(115deg, #6a6f76, #2c3138 55%, #1e2227 56%, #30353b); }
.slot.stack { margin-right: 11px; box-shadow: 3px 0 0 -1px #20252b, 4px 0 0 -1px #6c7177; }
.slot.lit { background: linear-gradient(115deg, #e8eaec, #b0b4b8 55%, #8a8e92 56%, #b8bcc0); }
.slot.bright { background: linear-gradient(115deg, #d5e8d8, #87a98c); }
.cmd { font: 8px "Liberation Mono", monospace; fill: #fff; }
.xl { font: 700 13px "Open Sans", sans-serif; fill: #fff; }
.uipath { width: 32px; height: 32px; background: #0a67df; color: #fff; font: 600 20px/31px "Open Sans", sans-serif; text-align: center; }
.uipath.navy { background: #0a4a9e; }
.ibas { width: 38px; height: 32px; background: linear-gradient(#e9f7e8, #2f9a46 35%, #0f7a2b); border-radius: 4px; color: #fff; font: 700 13px/30px "Liberation Sans", sans-serif; text-align: center; letter-spacing: -.5px; }
.ibas b { color: #e12b1f; }
.tray { margin-left: auto; display: flex; align-items: center; color: #fff; }
.tray svg:nth-child(1) { margin-right: 14px; }
.tray svg:nth-child(2) { margin-right: 7px; }
.tray svg:nth-child(3) { margin-right: 10px; }
.clock { width: 80px; padding-left: 3px; text-align: center; line-height: 17px; letter-spacing: -.4px; }
.show-desktop { width: 14px; height: 38px; margin-top: 1px; border: 1px solid #555c64; background: linear-gradient(115deg, #4a5058, #171b20); }

/* second browser */
.ie-head { position: relative; height: 55px; background: radial-gradient(ellipse at 0 10%, #5d7d9c 0, transparent 9%), linear-gradient(115deg, #2a5377 0, #143f66 180px, #0f3a5f 420px, #1a476f 560px, #0d385d 800px, #0d3a60 1500px, #1c4a72 1700px, #3b6488 1860px, #5f82a3 1920px); border-bottom: 1px solid #12304a; }
.ie-glow { position: absolute; left: 674px; top: 0; width: 574px; height: 27px; background: radial-gradient(ellipse at 45px 12px, #b8d4f4 0 4px, transparent 14px), radial-gradient(ellipse at 530px 12px, #a8c8f0 0 8px, transparent 24px), linear-gradient(#6f9fda, #2a60aa 45%, #1c4b8e); clip-path: polygon(0 0, 100% 0, 96% 100%, 4% 100%); filter: blur(1px); }
.ie-win { position: absolute; top: 0; right: 3px; border-color: #0d2740; }
.ie-win span, .ie-win .ie-close { background: #2b4a68; border-color: #0f2b46; }
.ie-win .ie-close { color: #fff; border: 0; padding-bottom: 2px; }
.ie-row { position: relative; height: 54px; padding-top: 27px; display: flex; border-bottom: 1px solid #8aa3ba; }
.ie-back { width: 37px; height: 37px; margin: -8px 0 0 1px; border-radius: 50%; background: #0b87cb; border: 1px solid #0b3353; display: flex; align-items: center; justify-content: center; clip-path: inset(0 0 3px); }
.ie-fwd { width: 25px; height: 25px; margin: -1px 0 0 5px; border-radius: 50%; background: #2f5474; border: 1px solid #102f4c; display: flex; align-items: center; justify-content: center; }
.ie-addr { width: 543px; height: 23px; margin-left: 4px; padding: 0 5px 0 3px; background: #a4b5c5; border: 1px solid #7890a6; display: flex; align-items: center; color: #4d5966; gap: 7px; }
.ie-url { width: 450px; margin-right: -3px; margin-left: -2px; color: #66727d; font-size: 12.500px; letter-spacing: -.55px; }
.ie-url b { font-weight: 400; color: #111; }
.flip { transform: scaleX(-1); }
.ie-tabs { margin-left: 5px; display: grid; grid-template-columns: 200px 200px 200px 26px; color: #20303e; }
.ie-tabs span { background: #8296a8; border: 1px solid #16324b; border-width: 0 0 0 1px; display: flex; align-items: center; gap: 4px; padding-left: 4px; letter-spacing: -.28px; }
.ie-tabs .on { background: #fff; color: #222; }
.ie-x { margin: -4px 0 0 2px; color: #999; }
.ie-icons { margin: 4px 9px 0 auto; display: flex; gap: 8px; }

/* spreadsheet */
.sheets { flex: 1; display: flex; flex-direction: column; font-family: Roboto, sans-serif; background: #fff; }
.doc-head { height: 58px; display: flex; padding-left: 21px; }
.doc-logo { margin-top: 12px; }
.doc-meta { margin-left: 20px; padding-top: 8px; }
.doc-title { height: 24px; display: grid; grid-template-columns: 192px 28px 26px 20px; align-items: center; font-size: 16px; color: #202124; letter-spacing: .12px; }
.doc-title svg { color: #5f6368; }
.doc-menu { display: grid; grid-template-columns: 33px 35px 40px 46px 54px 40px 44px 61px 45px 280px; line-height: 24px; font-size: 13.500px; color: #202124; letter-spacing: -.3px; }
.doc-menu a { font-size: 12.500px; color: #777; text-decoration: underline; letter-spacing: -.38px; }
.doc-actions { margin-left: auto; display: flex; align-items: center; padding-right: 17px; height: 57px; }
.doc-actions > svg:nth-child(1) { margin-right: 27px; }
.share { width: 80px; height: 32px; margin: 0 18px; padding: 0; border: 0; border-radius: 3px; background: #188038; color: #fff; font: 500 13.500px Roboto, sans-serif; display: flex; align-items: center; justify-content: center; gap: 9px; }
.avatar-lg { width: 30px; height: 30px; font-size: 17px; line-height: 31px; }
.doc-body { flex: 1; display: flex; min-height: 0; }
.doc-main { width: 1870px; display: flex; flex-direction: column; }
.doc-tools { height: 35px; flex: none; border-top: 1px solid #dadce0; padding-left: 39px; display: grid; align-items: center; color: #5f6368; font-size: 12px;
  grid-template-columns: 26px 25px 25px 16px 27px 29px 11px 17px 25px 23px 27px 24px 14px 12px 46px 45px 13px 19px 35px 12px 16px 25px 25px 26px 18px 17px 27px 28px 20px 11px 16px 16px 19px 16px 19px 16px 19px 16px 12px 17px 25px 25px 26px 20px 20px 16px 832px 0; }
/* each tool is centred on the start line of its track */
.doc-tools > * { justify-self: start; width: max-content; transform: translateX(-50%); }
.doc-tools > svg { width: auto; }
.sep { height: 18px; border-left: 1px solid #dadce0; }
.zoom { letter-spacing: -.45px; }
.dec { font-weight: 500; line-height: 10px; display: grid; }
.dec u { font-size: 9px; line-height: 4px; text-decoration: none; text-align: center; }
.n123, .tiny { font-size: 11px; }
.tiny { letter-spacing: -.38px; }
.dim { color: #c3c5c8; }
.lt { font-size: 15px; }
.ser { font: italic 700 15px "Liberation Serif", serif; }
.fg { border-bottom: 4px solid #000; line-height: 16px; padding: 0 4px; margin-top: 4px; }
.fx-bar { height: 22px; flex: none; border-top: 1px solid #dadce0; display: flex; align-items: center; color: #000; }
.fx-bar i { width: 41px; padding-left: 12px; border-right: 1px solid #dadce0; font: italic 17px/15px "Liberation Serif", serif; color: #aaa; }
.fx-bar span { padding-left: 9px; font: 12.500px "Liberation Sans", sans-serif; letter-spacing: -.25px; }
.grid-wrap { height: 859px; display: flex; border-top: 1px solid #c0c0c0; }
.grid { width: 1854px; height: 858px; overflow: hidden; font: 12.500px "Liberation Sans", sans-serif; letter-spacing: -.37px; color: #000; }
.g-row { display: grid; grid-template-columns: 41px 207px 199px 262px 122px 122px 122px 121px 122px 63px 112px 131px 90px 91px 91px; height: 19px; }
.g-row > span { border: solid #e2e3e3; border-width: 0 1px 1px 0; padding-left: 3px; line-height: 20px; overflow: hidden; }
.g-row > :first-child { background: #f8f9fa; border-color: #c0c0c0; color: #6f7378; font: 10px/17px Roboto, sans-serif; letter-spacing: -.1px; text-align: center; padding: 0; }
.g-cols { height: 22px; }
.g-cols > span { background: #f8f9fa; border-color: #c0c0c0; text-align: center; padding: 0; line-height: 22px; font-family: Roboto, sans-serif; font-size: 11px; color: #5f6368; }
.g-cols > :first-child { border-right: 3px solid #b7b7b7; }
.g-cols .hid-l, .g-cols .hid-r { display: flex; align-items: center; justify-content: center; position: relative; }
.hid-l::after, .hid-r::before { content: ""; position: absolute; top: 7px; border: solid transparent; border-width: 4px 0; }
.hid-l::after { right: 4px; border-right: 4px solid #000; }
.hid-r::before { left: 4px; border-left: 4px solid #000; }
.g-row > .hot { background: #e8eaed; }
.freeze { height: 4px; background: linear-gradient(90deg, #b7b7b7 41px, #dadfe8 41px); }
.g-row > .picked { position: relative; overflow: visible; margin: -1px 0 0 -1px; border: 1px solid #1a73e8; border-bottom-width: 2px; }
.picked::after { content: ""; position: absolute; right: -4px; bottom: -4px; width: 7px; height: 6px; background: #1a73e8; border: 1px solid #fff; border-width: 1px 0 0 1px; }
.v-scroll { width: 16px; background: #f0f0f0; border: solid #dadce0; border-width: 44px 0 0; border-image: linear-gradient(#f8f9fa 40px, #dadfe8 40px) 44 0 0; display: flex; flex-direction: column; align-items: center; padding-top: 15px; }
.v-scroll i { width: 16px; height: 13px; margin: 51px 0 auto; background: #cdcdcd; }
.v-scroll svg:last-child { margin-bottom: 19px; }
.h-scroll { height: 14px; margin-left: 41px; width: 1813px; background: #f0f0f0; display: flex; align-items: center; padding: 0 15px 0 15px; }
.h-scroll i { width: 885px; height: 14px; margin: 0 auto 0 9px; background: #cdcdcd; }
.sheet-tabs { height: 37px; border-top: 1px solid #dfe1e5; background: #f1f3f4; display: flex; align-items: center; padding-left: 44px; }
.sheet-tabs > svg:nth-child(2) { margin: 0 20px 0 17px; }
.sheet-tab { width: 87px; height: 36px; background: #fff; border-right: 1px solid #d5d7da; display: flex; align-items: center; gap: 7px; padding-left: 15px; color: #188038; font-weight: 500; font-size: 13px; letter-spacing: .15px; }
.explore { width: 95px; height: 36px; margin-left: auto; background: #fff; display: flex; align-items: center; padding-left: 11px; gap: 12px; color: #188038; font-size: 11.500px; letter-spacing: -.28px; }
.side { flex: 1; border-left: 1px solid #dadce0; display: flex; flex-direction: column; align-items: center; padding-top: 18px; }
.side svg:nth-child(2) { margin: 36px 0 34px; }
.side-more { margin: auto 0 22px; }
.cal { font: 700 8px Roboto, sans-serif; fill: #fff; }
```
FILE: script.js
```js
const letters = ['', 'A', 'C', 'D', 'E', 'F', 'G', 'H', 'I', 'J', 'K', 'L', 'M', 'N', 'O'];
const titles = ['1', 'Process', 'Task Name', 'Subscriber', 'Provisioning Action', 'Service Type', 'Account Number',
  'Serial Number', 'Time Start', 'Status', 'BOT Remarks', 'Time End', '', '', ''];

// process time, account, serial, start, end
const records = [
  ['12:27:49', '0020010273969', '4857544304DBF4A2', '13:04:09', '13:04:15'],
  ['12:27:50', '0020080306768', '485754436C06659F', '13:04:16', '13:04:22'],
  ['12:27:57', '0020030050217', '485754433CB5CF9F', '13:04:23', '13:04:35'],
  ['12:28:05', '0020230444072', '48575443F74C389D', '13:04:37', '13:04:44'],
  ['12:28:22', '0020010227464', '4857544326CE40A2', '13:04:45', '13:04:56'],
  ['12:28:31', '0020010254505', '4857544315E230A2', '13:04:56', '13:05:03'],
  ['12:28:39', '0020230763615', 'FHTT924EFB80', '13:05:04', '13:05:11'],
  ['12:28:39', '0020230763615', 'FHTT924EFB80', '13:05:04', '13:05:13'],
  ['12:29:44', '0020010074415', '48575443120B88A2', '17:58:09', '17:58:17'],
  ['12:29:52', '0020010000618', '48575443159C54A2', '17:58:18', '17:58:26'],
  ['12:30:02', '0020300221914', '485754437DC612A0', '17:58:27', '17:58:35'],
  ['12:30:10', '0020010269718', '485754437DC912A0', '17:58:36', '17:58:44'],
  ['12:30:19', '0020230729117', 'FHTT91DD9D10', '17:58:45', '17:58:52'],
  ['12:30:19', '0020230729117', 'FHTT91DD9D10', '17:58:45', '17:59:28'],
];

const firstRow = 1035, lastRow = 1077, pickedRow = 1042;
const grid = document.getElementById('grid');

function addRow(cells, rowClass, cellClasses = {}) {
  const row = document.createElement('div');
  row.className = 'g-row ' + rowClass;
  cells.forEach((text, i) => {
    const cell = document.createElement('span');
    cell.textContent = text;
    if (cellClasses[i]) cell.className = cellClasses[i];
    row.append(cell);
  });
  grid.append(row);
}

addRow(letters, 'g-cols', { 1: 'hid-l', 2: 'hid-r', 11: 'hot' });
addRow(titles, '');
const freeze = document.createElement('div');
freeze.className = 'freeze';
grid.append(freeze);

for (let n = firstRow; n <= lastRow; n++) {
  const rec = records[n - firstRow];
  let cells = [n].concat(Array(14).fill(''));
  if (rec) {
    const failed = n === 1048;
    cells = [n, `Provision Service (20200803 ${rec[0]})`, 'Provisioning failed, error check',
      n === 1036 ? '0020080306768 TARLAC BAMBAN BANABA DAP' : '',
      n >= 1047 ? 'deactivate' : 'activate', 'Internet', rec[1], rec[2], '08/03/2020 ' + rec[3],
      failed ? 'SYSTEM E' : 'DONE', failed ? 'Cannot find the UI ele' : 'SUCCESS',
      '08/03/2020 ' + rec[4], '', '', ''];
  }
  addRow(cells, '', n === pickedRow ? { 0: 'hot', 11: 'picked' } : {});
}
```
